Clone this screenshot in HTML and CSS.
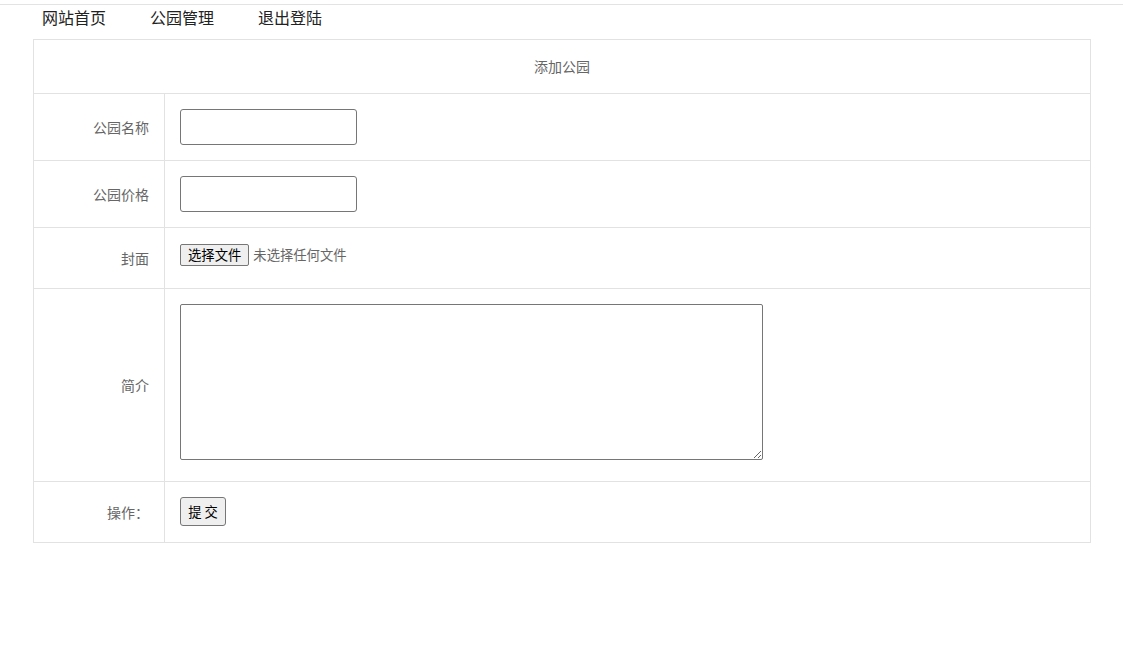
FILE: index.html
```html
<!DOCTYPE html>
<html lang="zh-CN">
<head>
    <meta charset="UTF-8">
    <meta name="viewport" content="width=device-width, initial-scale=1.0">
    <title>添加公园</title>
    <link rel="stylesheet" href="styles.css">
</head>
<body>

    <div class="topbar">
        <ul class="nav">
            <li><a href="#">网站首页</a></li>
            <li><a href="#">公园管理</a></li>
            <li><a href="#">退出登陆</a></li>
        </ul>
    </div>

    <form class="park-form" action="#" method="post">
        <table class="form-table">
            <tr class="title-row">
                <td colspan="2">添加公园</td>
            </tr>
            <tr>
                <td class="label">公园名称</td>
                <td><input type="text" class="text-input" name="name"></td>
            </tr>
            <tr>
                <td class="label">公园价格</td>
                <td><input type="text" class="text-input" name="price"></td>
            </tr>
            <tr>
                <td class="label">封面</td>
                <td>
                    <label class="file-field">
                        <input type="file" name="cover" class="file-hidden">
                        <span class="file-btn">选择文件</span>
                        <span class="file-name">未选择任何文件</span>
                    </label>
                </td>
            </tr>
            <tr>
                <td class="label">简介</td>
                <td><textarea class="intro" name="intro"></textarea></td>
            </tr>
            <tr>
                <td class="label">操作：</td>
                <td><button type="submit" class="submit-btn">提 交</button></td>
            </tr>
        </table>
    </form>

</body>
</html>
```
FILE: styles.css
```css
body {
    margin: 0;
    padding-top: 4px;
    font-family: "Microsoft YaHei", "Noto Sans CJK SC", sans-serif;
    background: #fff;
}
.topbar {
    border-top: 1px solid #e3e3e3;
}
.nav {
    list-style: none;
    margin: 0;
    padding: 1px 0 11px 42px;
    display: flex;
    gap: 44px;
    line-height: 22px;
    font-size: 16px;
}
.nav a {
    color: #222;
    text-decoration: none;
}
.park-form {
    margin: 0 32px 0 33px;
}
.form-table {
    width: 100%;
    border-collapse: collapse;
    font-size: 14px;
    color: #666;
}
.form-table td {
    border: 1px solid #e2e2e2;
    padding: 15px;
    vertical-align: middle;
}
.title-row td {
    text-align: center;
    padding: 16px 15px;
    line-height: 21px;
}
.form-table td.label {
    width: 100px;
    text-align: right;
}
.text-input {
    box-sizing: border-box;
    width: 177px;
    height: 36px;
    border: 1px solid #767676;
    border-radius: 3px;
    vertical-align: middle;
}
.file-field {
    display: flex;
    align-items: flex-start;
    gap: 4px;
    height: 29px;
    padding-top: 1px;
    cursor: pointer;
}
.file-hidden {
    display: none;
}
.file-btn {
    box-sizing: border-box;
    height: 22px;
    padding: 0 7px;
    line-height: 20px;
    font-size: 13.33px;
    color: #000;
    background: #efefef;
    border: 1px solid #767676;
    border-radius: 2px;
}
.file-name {
    font-size: 13.33px;
    line-height: 22px;
    color: #666;
}
.intro {
    display: block;
    box-sizing: border-box;
    width: 583px;
    height: 156px;
    margin-bottom: 6px;
    border: 1px solid #767676;
    border-radius: 2px;
}
.submit-btn {
    display: block;
    box-sizing: border-box;
    height: 29px;
    width: 46px;
    padding: 0;
    margin-bottom: 1px;
    font-family: inherit;
    font-size: 13.33px;
    color: #000;
    background: #efefef;
    border: 1px solid #767676;
    border-radius: 3px;
}
```
